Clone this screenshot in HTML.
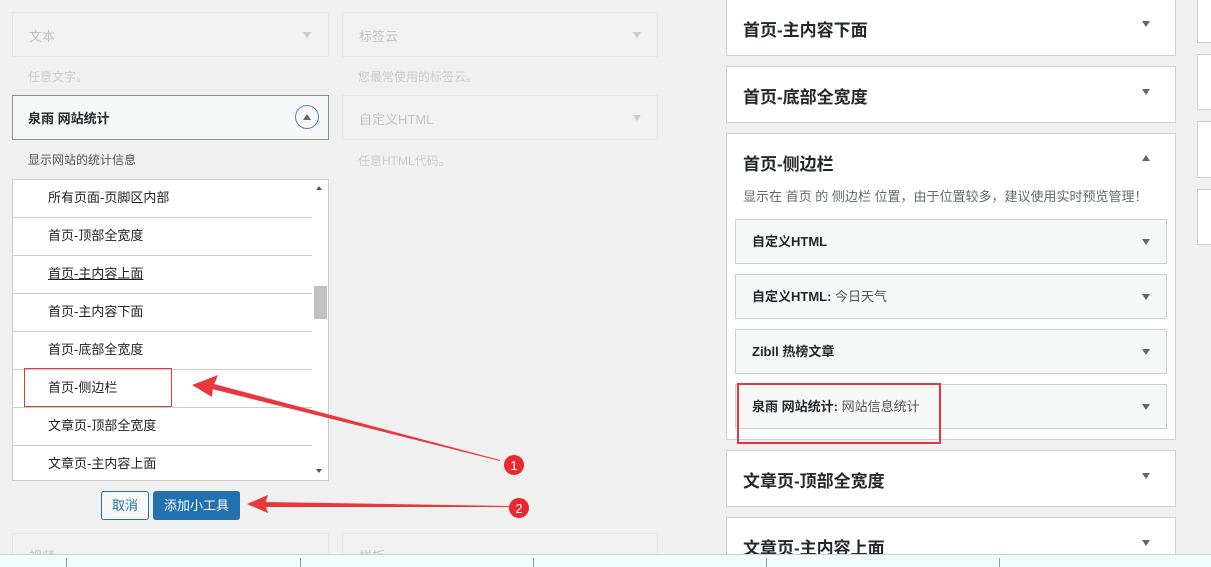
<!DOCTYPE html>
<html style="width:1211px;height:567px;overflow:hidden"><head><meta charset="utf-8"><style>
*{box-sizing:border-box;margin:0;padding:0}
body{width:1211px;height:567px;overflow:hidden;background:#f0f0f0;font-family:"Liberation Sans","Noto Sans CJK SC",sans-serif;position:relative;font-size:13px;color:#32373c}
.a{position:absolute}
.fade{border:1px solid #e6e6e6;background:#f1f1f1;color:#c4c4c4}
.tri{position:absolute;width:0;height:0;border-left:4px solid transparent;border-right:4px solid transparent;border-top:6px solid #666}
.triu{position:absolute;width:0;height:0;border-left:4px solid transparent;border-right:4px solid transparent;border-bottom:6px solid #666}
.li{position:absolute;left:0;width:299px;height:38px;border-bottom:1px solid #ccc;padding-left:35px;line-height:36px;font-size:13px;color:#222}
.box{position:absolute;left:726px;width:450px;background:#fff;border:1px solid #ccd0d4}
.box h3{position:absolute;left:16px;font-size:17px;font-weight:bold;color:#23282d}
.item{position:absolute;left:735px;width:432px;height:45px;background:#f6f7f7;border:1px solid #ccd0d4;font-size:13px;font-weight:bold;color:#23282d;padding-left:16px;line-height:43px}
.rb{position:absolute;left:1197px;width:20px;background:#fff;border:1px solid #ccd0d4}
</style></head><body>
<div class="a fade" style="left:12px;top:12px;width:317px;height:45px"><span class="a" style="left:16px;top:13px">文本</span><div class="tri" style="left:290px;top:19px;border-top-color:#ccc"></div></div>
<div class="a" style="left:28px;top:68px;color:#ccc;font-size:12px">任意文字。</div>
<div class="a fade" style="left:342px;top:12px;width:316px;height:45px"><span class="a" style="left:16px;top:13px">标签云</span><div class="tri" style="left:290px;top:19px;border-top-color:#ccc"></div></div>
<div class="a" style="left:358px;top:68px;color:#ccc;font-size:12px">您最常使用的标签云。</div>
<div class="a fade" style="left:342px;top:95px;width:316px;height:45px"><span class="a" style="left:16px;top:13px">自定义HTML</span><div class="tri" style="left:290px;top:19px;border-top-color:#ccc"></div></div>
<div class="a" style="left:358px;top:152px;color:#ccc;font-size:12px">任意HTML代码。</div>

<div class="a" style="left:12px;top:95px;width:317px;height:45px;background:#f6f7f7;border:1px solid #8c8f94"><span class="a" style="left:15px;top:12px;font-weight:bold;color:#23282d">泉雨 网站统计</span>
<div class="a" style="left:282px;top:9px;width:24px;height:24px;border-radius:50%;border:1.5px solid #5b81c4"></div><div class="triu" style="left:290px;top:18px"></div></div>
<div class="a" style="left:28px;top:151px;color:#555;font-size:12px">显示网站的统计信息</div>

<div class="a" style="left:12px;top:179px;width:317px;height:302px;background:#fff;border:1px solid #ccc;overflow:hidden">
<div class="li" style="top:0">所有页面-页脚区内部</div>
<div class="li" style="top:38px">首页-顶部全宽度</div>
<div class="li" style="top:76px"><u>首页-主内容上面</u></div>
<div class="li" style="top:114px">首页-主内容下面</div>
<div class="li" style="top:152px">首页-底部全宽度</div>
<div class="li" style="top:190px">首页-侧边栏</div>
<div class="li" style="top:228px">文章页-顶部全宽度</div>
<div class="li" style="top:266px;border:0">文章页-主内容上面</div>
<div class="a" style="left:299px;top:0;width:16px;height:300px;background:#fff"></div>
<div class="triu" style="left:303px;top:6px;border-bottom-color:#555;border-width:0 3px 4px"></div>
<div class="tri" style="left:303px;top:289px;border-top-color:#555;border-width:4px 3px 0"></div>
<div class="a" style="left:301px;top:106px;width:13px;height:33px;background:#c1c1c1"></div>
</div>
<div class="a" style="left:24px;top:368px;width:148px;height:39px;border:1px solid #e03a3a"></div>

<div class="a" style="left:101px;top:491px;width:48px;height:29px;border:1px solid #2271b1;background:#f6f7f7;color:#2271b1;border-radius:3px;text-align:center;line-height:27px">取消</div>
<div class="a" style="left:153px;top:491px;width:87px;height:29px;background:#2271b1;color:#fff;border-radius:3px;text-align:center;line-height:29px">添加小工具</div>

<div class="a fade" style="left:12px;top:533px;width:317px;height:34px"><span class="a" style="left:16px;top:12px">视频</span></div>
<div class="a fade" style="left:342px;top:533px;width:316px;height:34px"><span class="a" style="left:16px;top:12px">样板</span></div>

<div class="box" style="top:-2px;height:58px"><h3 style="top:17px">首页-主内容下面</h3><div class="tri" style="left:415px;top:22px"></div></div>
<div class="box" style="top:66px;height:57px"><h3 style="top:16px">首页-底部全宽度</h3><div class="tri" style="left:415px;top:22px"></div></div>
<div class="box" style="top:133px;height:307px"><h3 style="top:16px">首页-侧边栏</h3><div class="triu" style="left:415px;top:21px"></div>
<div class="a" style="left:16px;top:52px;font-size:13px;color:#646970">显示在 首页 的 侧边栏 位置，由于位置较多，建议使用实时预览管理！</div></div>
<div class="item" style="top:219px">自定义HTML<div class="tri" style="left:406px;top:19px"></div></div>
<div class="item" style="top:274px">自定义HTML: <span style="font-weight:normal;color:#555">今日天气</span><div class="tri" style="left:406px;top:19px"></div></div>
<div class="item" style="top:329px">Zibll 热榜文章<div class="tri" style="left:406px;top:19px"></div></div>
<div class="item" style="top:384px">泉雨 网站统计: <span style="font-weight:normal;color:#555">网站信息统计</span><div class="tri" style="left:406px;top:19px"></div></div>
<div class="a" style="left:737px;top:383px;width:204px;height:61px;border:2px solid #e0383e"></div>
<div class="box" style="top:450px;height:57px"><h3 style="top:16px">文章页-顶部全宽度</h3><div class="tri" style="left:415px;top:22px"></div></div>
<div class="box" style="top:517px;height:50px"><h3 style="top:16px">文章页-主内容上面</h3><div class="tri" style="left:415px;top:22px"></div></div>

<div class="rb" style="top:-2px;height:45px"></div>
<div class="rb" style="top:54px;height:56px"></div>
<div class="rb" style="top:121px;height:57px"></div>
<div class="rb" style="top:189px;height:56px"></div>

<div class="a" style="left:0;top:554px;width:1211px;height:13px;background:#eefcfd;border-top:1px solid #c9d3d5"></div>
<div class="a" style="left:66px;top:558px;width:1px;height:9px;background:#999"></div>
<div class="a" style="left:300px;top:558px;width:1px;height:9px;background:#999"></div>
<div class="a" style="left:533px;top:558px;width:1px;height:9px;background:#999"></div>
<div class="a" style="left:766px;top:558px;width:1px;height:9px;background:#999"></div>
<div class="a" style="left:999px;top:558px;width:1px;height:9px;background:#999"></div>

<svg class="a" style="left:0;top:0" width="1211" height="567">
<polygon points="500,461 212,389 214,384 500,460" fill="#e8383d"/>
<polygon points="192,385 218,375 213,387 212,397" fill="#e8383d"/>
<polygon points="510,506 265,502 265,507 510,507" fill="#e8383d"/>
<polygon points="247,504 268,495 265,504 268,513" fill="#e8383d"/>
<circle cx="514" cy="465" r="10" fill="#e8282d"/>
<circle cx="519" cy="508" r="10" fill="#e8282d"/>
<text x="514" y="470" font-size="13" fill="#fff" text-anchor="middle" font-family="Liberation Sans">1</text>
<text x="519" y="513" font-size="13" fill="#fff" text-anchor="middle" font-family="Liberation Sans">2</text>
</svg>
</body></html>
